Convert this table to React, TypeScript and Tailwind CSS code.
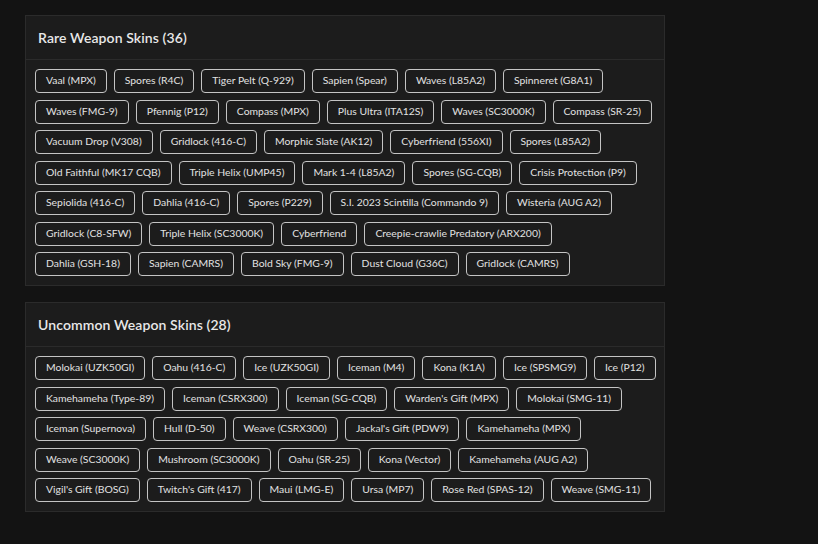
const rare = [
  ['Vaal (MPX)', 'Spores (R4C)', 'Tiger Pelt (Q-929)', 'Sapien (Spear)', 'Waves (L85A2)', 'Spinneret (G8A1)'],
  ['Waves (FMG-9)', 'Pfennig (P12)', 'Compass (MPX)', 'Plus Ultra (ITA12S)', 'Waves (SC3000K)', 'Compass (SR-25)'],
  ['Vacuum Drop (V308)', 'Gridlock (416-C)', 'Morphic Slate (AK12)', 'Cyberfriend (556XI)', 'Spores (L85A2)'],
  ['Old Faithful (MK17 CQB)', 'Triple Helix (UMP45)', 'Mark 1-4 (L85A2)', 'Spores (SG-CQB)', 'Crisis Protection (P9)'],
  ['Sepiolida (416-C)', 'Dahlia (416-C)', 'Spores (P229)', 'S.I. 2023 Scintilla (Commando 9)', 'Wisteria (AUG A2)'],
  ['Gridlock (C8-SFW)', 'Triple Helix (SC3000K)', 'Cyberfriend', 'Creepie-crawlie Predatory (ARX200)'],
  ['Dahlia (GSH-18)', 'Sapien (CAMRS)', 'Bold Sky (FMG-9)', 'Dust Cloud (G36C)', 'Gridlock (CAMRS)'],
];

const uncommon = [
  ['Molokai (UZK50GI)', 'Oahu (416-C)', 'Ice (UZK50GI)', 'Iceman (M4)', 'Kona (K1A)', 'Ice (SPSMG9)', 'Ice (P12)'],
  ['Kamehameha (Type-89)', 'Iceman (CSRX300)', 'Iceman (SG-CQB)', "Warden's Gift (MPX)", 'Molokai (SMG-11)'],
  ['Iceman (Supernova)', 'Hull (D-50)', 'Weave (CSRX300)', "Jackal's Gift (PDW9)", 'Kamehameha (MPX)'],
  ['Weave (SC3000K)', 'Mushroom (SC3000K)', 'Oahu (SR-25)', 'Kona (Vector)', 'Kamehameha (AUG A2)'],
  ["Vigil's Gift (BOSG)", "Twitch's Gift (417)", 'Maui (LMG-E)', 'Ursa (MP7)', 'Rose Red (SPAS-12)', 'Weave (SMG-11)'],
];

function SkinPanel({ title, rows }: { title: string; rows: string[][] }) {
  const count = rows.reduce((n, r) => n + r.length, 0);
  return (
    <section className="w-[640px] border border-[#2b2b2b] bg-[#1c1c1c]">
      {/* Header */}
      <div className="flex h-[44px] items-center border-b border-[#2b2b2b] px-[12px]">
        <h2 className="text-[14px] font-semibold tracking-[0.1px] text-[#e8e8e8]">
          {title} ({count})
        </h2>
      </div>

      {/* Skins */}
      <div className="flex flex-col gap-[6.5px] p-[9px]">
        {rows.map((row, i) => (
          <div key={i} className="flex gap-[7px]">
            {row.map((s) => (
              <span
                key={s}
                className="flex h-[24px] items-center whitespace-nowrap rounded-[4px] border border-[#c4c4c4] px-[10px] text-[10.4px] text-[#e2e2e2]"
              >
                {s}
              </span>
            ))}
          </div>
        ))}
      </div>
    </section>
  );
}

export default function App() {
  return (
    <div
      className="min-h-[544px] bg-[#131313] pl-[25px] pt-[15px]"
      style={{ fontFamily: 'Lato, "Noto Sans", sans-serif' }}
    >
      <SkinPanel title="Rare Weapon Skins" rows={rare} />
      <div className="mt-[16px]">
        <SkinPanel title="Uncommon Weapon Skins" rows={uncommon} />
      </div>
    </div>
  );
}
